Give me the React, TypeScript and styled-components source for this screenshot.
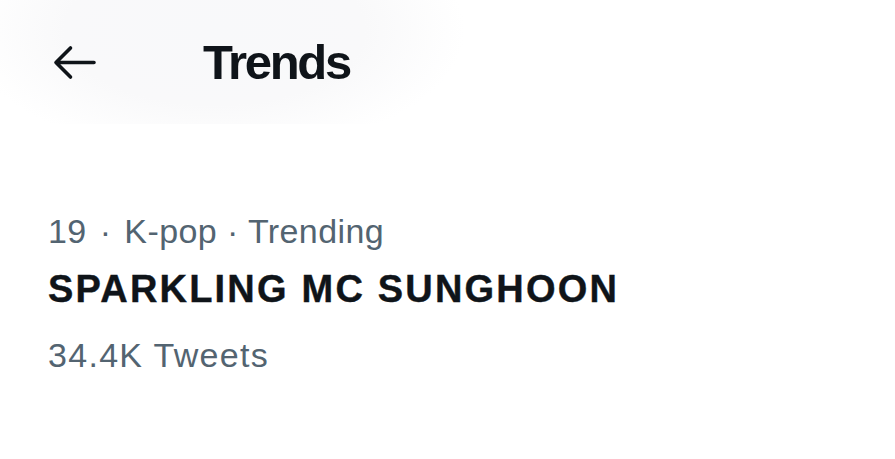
import React from 'react';
import styled, { createGlobalStyle } from 'styled-components';

const GlobalStyle = createGlobalStyle`
  html, body {
    margin: 0;
    padding: 0;
    background: #ffffff;
  }
  body {
    font-family: 'Liberation Sans', Arial, sans-serif;
    color: #0f1419;
  }
`;

const App: React.FC<{}> = () => {
  return (
    <Page>
      <GlobalStyle />
      <Header>
        <BackButton aria-label="Back">
          <svg width="43" height="35" viewBox="0 0 43 35" fill="none">
            <path
              d="M41 17.5H3M17.5 3L3 17.5L17.5 32"
              stroke="#0f1419"
              strokeWidth="3.6"
              strokeLinecap="round"
              strokeLinejoin="round"
            />
          </svg>
        </BackButton>
        <Title>Trends</Title>
      </Header>

      <TrendItem>
        <Meta>
          19<Sep>·</Sep>K-pop · Trending
        </Meta>
        <TrendName>SPARKLING MC SUNGHOON</TrendName>
        <Count>34.4K Tweets</Count>
      </TrendItem>
    </Page>
  );
};

export default App;

/* Styling */
const Page = styled.div`
  width: 895px;
  height: 459px;
  overflow: hidden;
  background: #ffffff;
`;

const Header = styled.header`
  display: flex;
  align-items: center;
  height: 124px;
  padding-left: 53px;
  box-sizing: border-box;
  background: radial-gradient(
    ellipse 250px 125px at 215px 30px,
    #f8f9fa 0%,
    #f9f9fa 60%,
    #ffffff 100%
  );
`;

const BackButton = styled.div`
  display: flex;
  align-items: center;
  width: 43px;
  height: 35px;
`;

const Title = styled.h1`
  margin: 0 0 0 107px;
  font-size: 49px;
  line-height: 56px;
  font-weight: 700;
  letter-spacing: -2.3px;
  color: #0f1419;
`;

const TrendItem = styled.section`
  display: flex;
  flex-direction: column;
  padding: 87px 0 0 48px;
`;

const Meta = styled.div`
  font-size: 34px;
  line-height: 40px;
  letter-spacing: 0.4px;
  color: #536471;
`;

const Sep = styled.span`
  margin: 0 13px;
`;

const TrendName = styled.div`
  margin-top: 16px;
  font-size: 38px;
  line-height: 44px;
  font-weight: 700;
  letter-spacing: 2.2px;
  -webkit-text-stroke: 0.4px #0f1419;
  color: #0f1419;
`;

const Count = styled.div`
  margin-top: 24px;
  font-size: 34px;
  line-height: 40px;
  letter-spacing: 1.3px;
  color: #536471;
`;
